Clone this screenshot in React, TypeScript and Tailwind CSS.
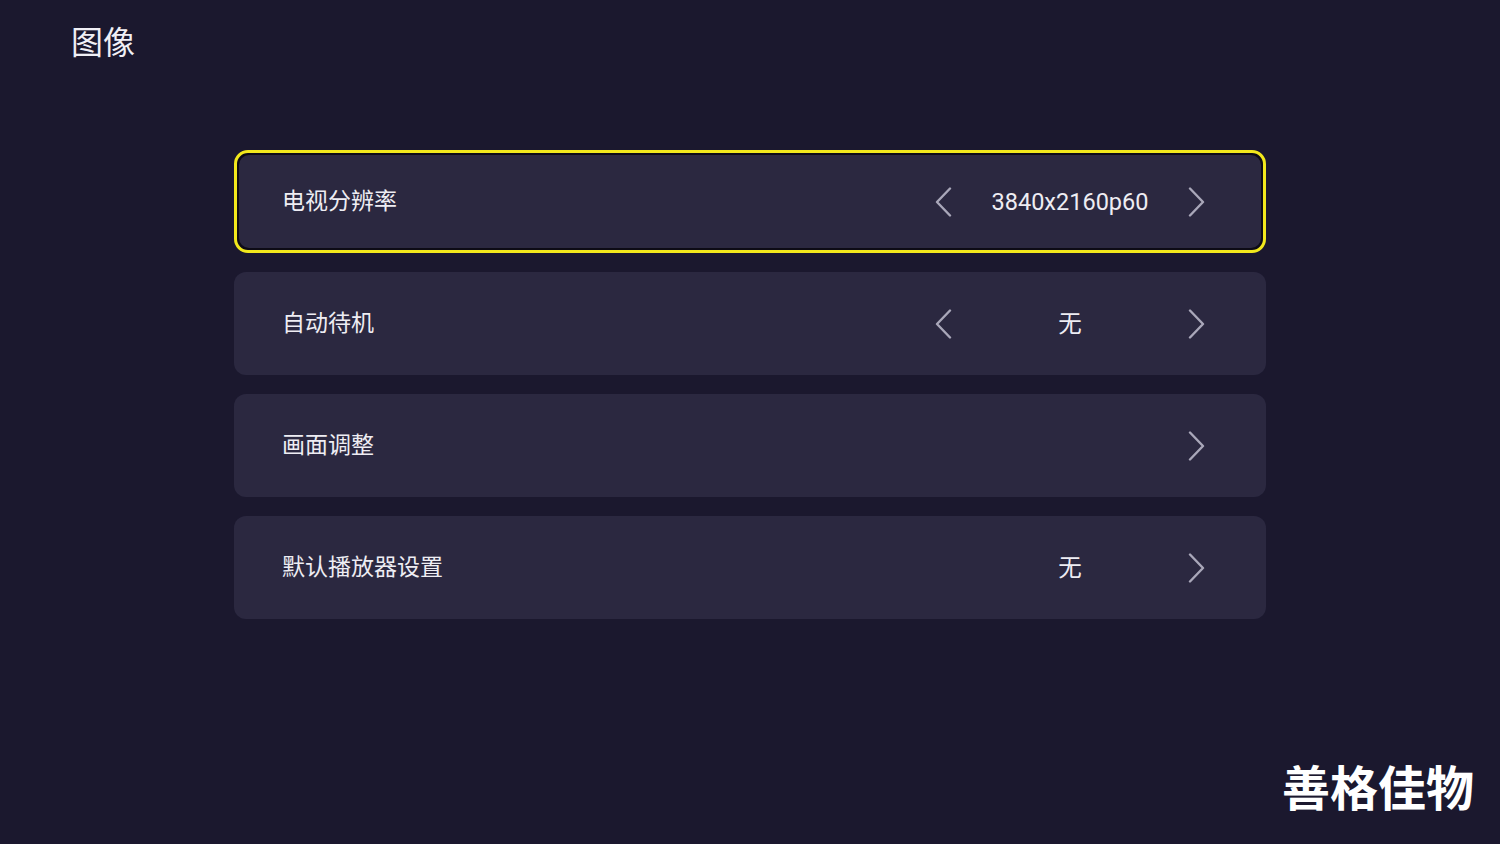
import React from 'react';

type Row = {
  label: string;
  value?: string;
  left?: boolean;
  focused?: boolean;
};

const rows: Row[] = [
  { label: '电视分辨率', value: '3840x2160p60', left: true, focused: true },
  { label: '自动待机', value: '无', left: true },
  { label: '画面调整' },
  { label: '默认播放器设置', value: '无' },
];

const font = { fontFamily: 'Roboto, "Noto Sans CJK SC", sans-serif' };

function Chevron({ dir }: { dir: 'left' | 'right' }) {
  return (
    <svg width="18" height="30" viewBox="0 0 18 30" fill="none">
      <path
        d={dir === 'left' ? 'M16 1.5 L3 15 L16 28.5' : 'M2 1.5 L15 15 L2 28.5'}
        stroke="#a9a7b9"
        strokeWidth="2.4"
        strokeLinecap="round"
        strokeLinejoin="round"
      />
    </svg>
  );
}

function SettingRow({ row }: { row: Row }) {
  const inner = (
    <div className="flex h-full items-center rounded-[12px] bg-[#2b2840] pl-[48px] pr-[60px]">
      <span className="flex-1 pt-[2px] text-[23px] text-[#eeedf3]">{row.label}</span>
      <div className="flex items-center">
        <div className="flex w-[18px] justify-center">{row.left && <Chevron dir="left" />}</div>
        <div className="w-[236px] pt-[2px] text-center text-[23.5px] text-[#eeedf3]">{row.value}</div>
        <Chevron dir="right" />
      </div>
    </div>
  );

  if (row.focused) {
    return (
      <div className="h-[103px] rounded-[14px] border-[3px] border-[#f2e81c] bg-[#0d0b16] p-[2px]">
        <div className="h-full [&>div]:pl-[43px] [&>div]:pr-[55px] [&>div]:rounded-[10px]">{inner}</div>
      </div>
    );
  }
  return <div className="h-[103px]">{inner}</div>;
}

export default function App() {
  return (
    <div className="relative h-[844px] w-[1500px] overflow-hidden bg-[#1b182e]" style={font}>
      <div className="pl-[71px] pt-[21px] text-[32px] leading-[44px] text-[#f0eff5]">图像</div>
      <div className="mx-[234px] mt-[85px] flex flex-col gap-[19px]">
        {rows.map((r) => (
          <SettingRow key={r.label} row={r} />
        ))}
      </div>
      <div className="absolute bottom-[30px] right-[26px] text-[48px] font-bold leading-none text-white">
        善格佳物
      </div>
    </div>
  );
}
